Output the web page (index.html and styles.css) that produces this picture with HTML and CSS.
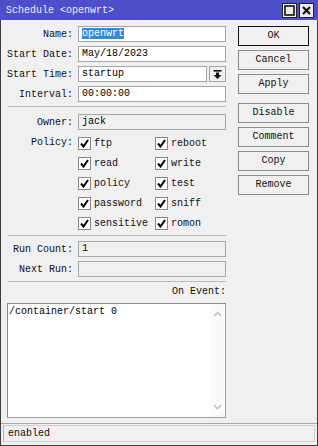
FILE: index.html
```html
<!DOCTYPE html>
<html>
<head>
<meta charset="utf-8">
<link rel="stylesheet" href="styles.css">
</head>
<body>
<div class="window">
  <div class="titlebar">
    <span class="title">Schedule &lt;openwrt&gt;</span>
    <div class="tbtns">
      <span class="tbtn"><svg width="11" height="11" viewBox="0 0 11 11"><rect x="1" y="1" width="9" height="9" fill="none" stroke="#111" stroke-width="1.6"/></svg></span>
      <span class="tbtn"><svg width="11" height="11" viewBox="0 0 11 11"><path d="M2 2L9 9M9 2L2 9" stroke="#111" stroke-width="2.2"/></svg></span>
    </div>
  </div>
  <div class="main">
    <div class="form">
      <div class="row"><label class="lbl">Name:</label><div class="inp"><span class="sel">openwrt</span></div></div>
      <div class="row"><label class="lbl">Start Date:</label><div class="inp">May/18/2023</div></div>
      <div class="row"><label class="lbl">Start Time:</label><div class="inp">startup</div><span class="ddbtn"><svg width="9" height="9" viewBox="0 0 9 9"><rect x="0.5" y="0" width="8" height="1.6" fill="#111"/><path d="M3 2.5H6V5H8.5L4.5 9L0.5 5H3Z" fill="#111"/></svg></span></div>
      <div class="row"><label class="lbl">Interval:</label><div class="inp">00:00:00</div></div>
      <div class="sep"></div>
      <div class="row"><label class="lbl">Owner:</label><div class="inp dis">jack</div></div>
      <div class="policy">
        <label class="lbl plbl">Policy:</label>
        <div class="checks">
          <div class="ck"><span class="box"><svg width="9" height="9" viewBox="0 0 9 9"><path d="M1 4.5L3.5 7.5L8 1" fill="none" stroke="#000" stroke-width="2"/></svg></span>ftp</div>
          <div class="ck"><span class="box"><svg width="9" height="9" viewBox="0 0 9 9"><path d="M1 4.5L3.5 7.5L8 1" fill="none" stroke="#000" stroke-width="2"/></svg></span>reboot</div>
          <div class="ck"><span class="box"><svg width="9" height="9" viewBox="0 0 9 9"><path d="M1 4.5L3.5 7.5L8 1" fill="none" stroke="#000" stroke-width="2"/></svg></span>read</div>
          <div class="ck"><span class="box"><svg width="9" height="9" viewBox="0 0 9 9"><path d="M1 4.5L3.5 7.5L8 1" fill="none" stroke="#000" stroke-width="2"/></svg></span>write</div>
          <div class="ck"><span class="box"><svg width="9" height="9" viewBox="0 0 9 9"><path d="M1 4.5L3.5 7.5L8 1" fill="none" stroke="#000" stroke-width="2"/></svg></span>policy</div>
          <div class="ck"><span class="box"><svg width="9" height="9" viewBox="0 0 9 9"><path d="M1 4.5L3.5 7.5L8 1" fill="none" stroke="#000" stroke-width="2"/></svg></span>test</div>
          <div class="ck"><span class="box"><svg width="9" height="9" viewBox="0 0 9 9"><path d="M1 4.5L3.5 7.5L8 1" fill="none" stroke="#000" stroke-width="2"/></svg></span>password</div>
          <div class="ck"><span class="box"><svg width="9" height="9" viewBox="0 0 9 9"><path d="M1 4.5L3.5 7.5L8 1" fill="none" stroke="#000" stroke-width="2"/></svg></span>sniff</div>
          <div class="ck"><span class="box"><svg width="9" height="9" viewBox="0 0 9 9"><path d="M1 4.5L3.5 7.5L8 1" fill="none" stroke="#000" stroke-width="2"/></svg></span>sensitive</div>
          <div class="ck"><span class="box"><svg width="9" height="9" viewBox="0 0 9 9"><path d="M1 4.5L3.5 7.5L8 1" fill="none" stroke="#000" stroke-width="2"/></svg></span>romon</div>
        </div>
      </div>
      <div class="sep sep2"></div>
      <div class="row"><label class="lbl">Run Count:</label><div class="inp dis">1</div></div>
      <div class="row"><label class="lbl">Next Run:</label><div class="inp dis"></div></div>
      <div class="sep"></div>
      <div class="evlbl">On Event:</div>
      <div class="textarea">
        <div class="tatext">/container/start 0</div>
        <div class="scroll">
          <svg width="9" height="6" viewBox="0 0 9 6"><path d="M1 5L4.5 1.5L8 5" fill="none" stroke="#c4c4c4" stroke-width="1.6"/></svg>
          <svg width="9" height="6" viewBox="0 0 9 6"><path d="M1 1L4.5 4.5L8 1" fill="none" stroke="#c4c4c4" stroke-width="1.6"/></svg>
        </div>
      </div>
    </div>
    <div class="buttons">
      <div class="btn def">OK</div>
      <div class="btn">Cancel</div>
      <div class="btn">Apply</div>
      <div class="btn gap">Disable</div>
      <div class="btn">Comment</div>
      <div class="btn">Copy</div>
      <div class="btn">Remove</div>
    </div>
  </div>
  <div class="status"><div class="stbox">enabled</div></div>
</div>
</body>
</html>
```

FILE: styles.css
```css
html, body {
  margin: 0;
  padding: 0;
  background: #f0f0f0;
}
body {
  font-family: "Liberation Mono", "DejaVu Sans Mono", monospace;
  font-size: 10px;
  color: #111;
}
.window {
  width: 318px;
  height: 446px;
  box-sizing: border-box;
  border: 1px solid #3c3c3c;
  border-top: none;
  background: #f0f0f0;
  display: flex;
  flex-direction: column;
}
.titlebar {
  height: 20px;
  margin: 0 -1px;
  background: #4c4fc8;
  display: flex;
  align-items: center;
  justify-content: space-between;
  padding: 0 4px 0 6px;
}
.title {
  color: #ececff;
  font-size: 10px;
}
.tbtns {
  display: flex;
  gap: 2px;
}
.tbtn {
  width: 13px;
  height: 13px;
  border: 1px solid #222;
  background: #ececec;
  display: flex;
  align-items: center;
  justify-content: center;
}
.main {
  display: flex;
  padding: 6px 0 0 6px;
  gap: 12px;
}
.form {
  width: 219px;
  display: flex;
  flex-direction: column;
}
.row {
  display: flex;
  align-items: center;
  height: 16px;
  margin-bottom: 4px;
}
.lbl {
  width: 66px;
  text-align: right;
  margin-right: 5px;
  flex-shrink: 0;
  color: #111;
}
.inp {
  flex: 1;
  height: 16px;
  box-sizing: border-box;
  border: 1px solid #a4a4a4;
  background: #fff;
  padding: 0 3px;
  line-height: 14px;
  white-space: nowrap;
  color: #000;
}
.inp.dis {
  background: #f0f0f0;
  border-color: #a8a8a8;
}
.sel {
  background: #3189e0;
  color: #fff;
}
.ddbtn {
  width: 17px;
  height: 16px;
  box-sizing: border-box;
  margin-left: 2px;
  border: 1px solid #a4a4a4;
  background: #f0f0f0;
  display: flex;
  align-items: center;
  justify-content: center;
}
.sep {
  height: 1px;
  background: #bcbcbc;
  margin: 0 0 7px 1px;
}
.sep2 {
  margin-top: 2px;
  margin-bottom: 5px;
}
.policy {
  display: flex;
  margin-top: -1px;
}
.plbl {
  line-height: 20px;
}
.checks {
  display: grid;
  grid-template-columns: 77px 70px;
  grid-auto-rows: 20px;
}
.ck {
  display: flex;
  align-items: center;
  gap: 3px;
  white-space: nowrap;
}
.box {
  width: 13px;
  height: 13px;
  box-sizing: border-box;
  border: 1px solid #8a8a8a;
  background: #fff;
  display: flex;
  align-items: center;
  justify-content: center;
}
.evlbl {
  text-align: right;
  height: 12px;
  line-height: 12px;
  margin-top: -3px;
  margin-bottom: 5px;
}
.textarea {
  height: 115px;
  box-sizing: border-box;
  border: 1px solid #a0a0a0;
  border-left-color: #8a8a8a;
  border-top-color: #8a8a8a;
  background: #fff;
  display: flex;
}
.tatext {
  flex: 1;
  padding: 1px 1px;
  font-size: 10px;
  line-height: 13px;
  color: #000;
}
.scroll {
  width: 16px;
  background: #fafafa;
  display: flex;
  flex-direction: column;
  justify-content: space-between;
  align-items: center;
  padding: 7px 0 7px;
}
.buttons {
  display: flex;
  flex-direction: column;
  width: 71px;
}
.btn {
  height: 20px;
  box-sizing: border-box;
  border: 1px solid #8c8c8c;
  background: #f0f0f0;
  text-align: center;
  line-height: 18px;
  margin-bottom: 4px;
  color: #111;
}
.btn.def {
  border-color: #111;
}
.btn.gap {
  margin-top: 5px;
}
.status {
  margin-top: auto;
  border-top: 1px solid #a8a8a8;
  padding: 1px 2px 3px 2px;
}
.stbox {
  height: 17px;
  box-sizing: border-box;
  border: 1px solid #cfcfcf;
  border-left-color: #b0b0b0;
  line-height: 15px;
  padding-left: 4px;
}
```
